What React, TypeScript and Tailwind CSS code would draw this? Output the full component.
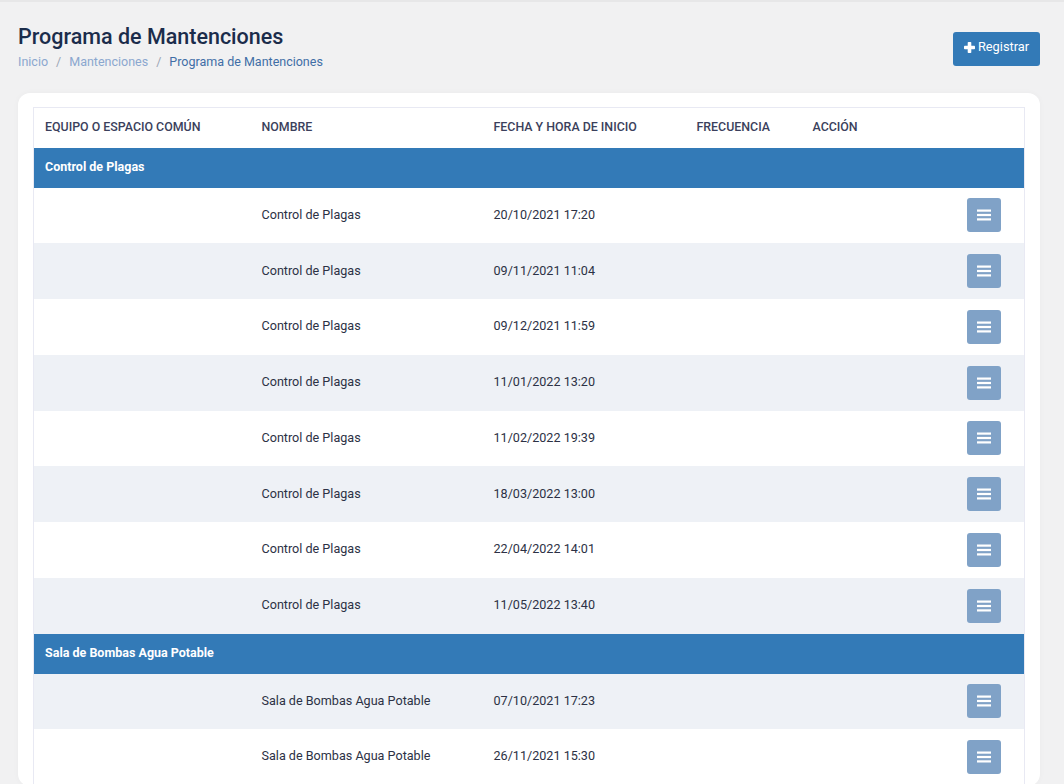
import React from "react";

type Row = { nombre: string; fecha: string };
type Group = { title: string; rows: Row[]; startGray: boolean };

const groups: Group[] = [
  {
    title: "Control de Plagas",
    startGray: false,
    rows: [
      { nombre: "Control de Plagas", fecha: "20/10/2021 17:20" },
      { nombre: "Control de Plagas", fecha: "09/11/2021 11:04" },
      { nombre: "Control de Plagas", fecha: "09/12/2021 11:59" },
      { nombre: "Control de Plagas", fecha: "11/01/2022 13:20" },
      { nombre: "Control de Plagas", fecha: "11/02/2022 19:39" },
      { nombre: "Control de Plagas", fecha: "18/03/2022 13:00" },
      { nombre: "Control de Plagas", fecha: "22/04/2022 14:01" },
      { nombre: "Control de Plagas", fecha: "11/05/2022 13:40" },
    ],
  },
  {
    title: "Sala de Bombas Agua Potable",
    startGray: true,
    rows: [
      { nombre: "Sala de Bombas Agua Potable", fecha: "07/10/2021 17:23" },
      { nombre: "Sala de Bombas Agua Potable", fecha: "26/11/2021 15:30" },
    ],
  },
];

function Bars() {
  return (
    <svg width="14" height="12" viewBox="0 0 14 12" fill="#ffffff">
      <rect x="0" y="0.5" width="14" height="2.2" />
      <rect x="0" y="4.9" width="14" height="2.2" />
      <rect x="0" y="9.3" width="14" height="2.2" />
    </svg>
  );
}

function Plus() {
  return (
    <svg width="11" height="11" viewBox="0 0 11 11" fill="#ffffff">
      <rect x="3.7" y="0" width="3.6" height="11" rx="0.8" />
      <rect x="0" y="3.7" width="11" height="3.6" rx="0.8" />
    </svg>
  );
}

export default function App() {
  return (
    <div
      className="h-[784px] w-[1064px] overflow-hidden bg-[#f1f1f2] border-t-2 border-[#e7e7e8]"
      style={{ fontFamily: "Roboto, 'Liberation Sans', sans-serif" }}
    >
      <div className="flex h-full">
        <div className="flex-1 pl-[18px] pr-[24px]">
          <div className="flex items-start justify-between pt-[21px]">
            <div>
              <h1 className="text-[21.5px] leading-[28px] font-medium text-[#1b2c4b]">
                Programa de Mantenciones
              </h1>
              <div className="mt-[2px] flex items-center text-[12.5px] leading-[18px]">
                <span className="text-[#8ba7cf]">Inicio</span>
                <span className="px-[8px] text-[#9ca6b5]">/</span>
                <span className="text-[#8ba7cf]">Mantenciones</span>
                <span className="px-[8px] text-[#9ca6b5]">/</span>
                <span className="text-[#3f6ea6]">Programa de Mantenciones</span>
              </div>
            </div>
            <button className="mt-[9px] flex h-[34px] w-[87px] items-center justify-center gap-[3px] rounded-[3px] bg-[#337ab7] pb-[4px] text-[12.8px] text-white">
              <Plus />
              <span>Registrar</span>
            </button>
          </div>

          <div className="mt-[22px] rounded-[12px] bg-white px-[15px] pt-[14px] shadow-[0_0_6px_rgba(0,0,0,0.03)]">
            <table className="w-full table-fixed border border-[#e8e9f3] border-collapse text-left">
              <colgroup>
                <col className="w-[217px]" />
                <col className="w-[232px]" />
                <col className="w-[203px]" />
                <col className="w-[116px]" />
                <col />
              </colgroup>
              <thead>
                <tr className="h-[40px]">
                  {["EQUIPO O ESPACIO COMÚN", "NOMBRE", "FECHA Y HORA DE INICIO", "FRECUENCIA", "ACCIÓN"].map(
                    (h) => (
                      <th
                        key={h}
                        className="px-[11px] text-[12.4px] font-medium text-[#3b3f5c] whitespace-nowrap"
                      >
                        {h}
                      </th>
                    )
                  )}
                </tr>
              </thead>
              <tbody>
                {groups.map((g) => (
                  <React.Fragment key={g.title}>
                    <tr className="h-[40px] bg-[#337ab7]">
                      <td colSpan={5} className="px-[11px] text-[12.5px] font-bold text-white">
                        {g.title}
                      </td>
                    </tr>
                    {g.rows.map((r, i) => {
                      const gray = g.startGray ? i % 2 === 0 : i % 2 === 1;
                      return (
                        <tr
                          key={r.fecha}
                          className={gray ? "h-[55.75px] bg-[#eef1f6]" : "h-[55.75px] bg-white"}
                        >
                          <td className="px-[11px]"></td>
                          <td className="px-[11px] text-[12.6px] text-[#2c3145]">{r.nombre}</td>
                          <td className="px-[11px] text-[12.6px] text-[#2c3145]">{r.fecha}</td>
                          <td className="px-[11px]"></td>
                          <td className="pl-[11px] pr-[23px]">
                            <div className="flex justify-end">
                              <button className="flex h-[34px] w-[34px] items-center justify-center rounded-[3px] bg-[#80a2c7]">
                                <Bars />
                              </button>
                            </div>
                          </td>
                        </tr>
                      );
                    })}
                  </React.Fragment>
                ))}
              </tbody>
            </table>
          </div>
        </div>
      </div>
    </div>
  );
}
